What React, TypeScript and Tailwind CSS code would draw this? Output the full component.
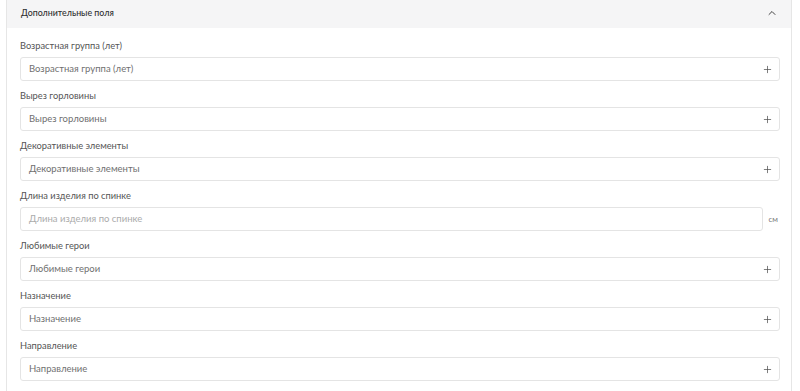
import { Plus, ChevronUp } from "lucide-react";

type Field = {
  label: string;
  unit?: string;
  muted?: boolean;
};

const fields: Field[] = [
  { label: "Возрастная группа (лет)" },
  { label: "Вырез горловины" },
  { label: "Декоративные элементы" },
  { label: "Длина изделия по спинке", unit: "см", muted: true },
  { label: "Любимые герои" },
  { label: "Назначение" },
  { label: "Направление" },
];

const FieldRow = ({ label, unit, muted }: Field) => (
  <div className="flex flex-col">
    <label className="h-[12px] text-[9.3px] leading-[12px] text-[#555] mb-[5px]">{label}</label>
    <div className="flex items-center">
      <div className="flex-1 h-[24px] flex items-center border border-[#e4e4e4] rounded-[3px] bg-white pl-[8px] pr-[6px]">
        <span className={`flex-1 text-[9.5px] ${muted ? "text-[#ababab]" : "text-[#707070]"}`}>{label}</span>
        {!unit && <Plus size={11} strokeWidth={1.6} className="text-[#505050]" />}
      </div>
      {unit && <span className="w-[17px] text-right pr-[2px] text-[8px] text-[#777]">{unit}</span>}
    </div>
  </div>
);

export default function App() {
  return (
    <div className="w-[800px] h-[391px] overflow-hidden bg-white pl-[6px] pr-[8px]" style={{ fontFamily: "Lato, 'Open Sans', sans-serif" }}>
      <div className="h-full border-x border-[#e6e6e6]">
        <div className="h-[28px] bg-[#f5f5f6] flex items-center justify-between pl-[14px] pr-[13px] pb-[3px]">
          <span className="text-[8.8px] font-medium text-[#2e2e2e]">Дополнительные поля</span>
          <ChevronUp size={12} strokeWidth={2} className="text-[#444]" />
        </div>
        <div className="flex flex-col gap-[9px] pt-[12px] pl-[13px] pr-[11px]">
          {fields.map((f) => (
            <FieldRow key={f.label} {...f} />
          ))}
        </div>
      </div>
    </div>
  );
}
